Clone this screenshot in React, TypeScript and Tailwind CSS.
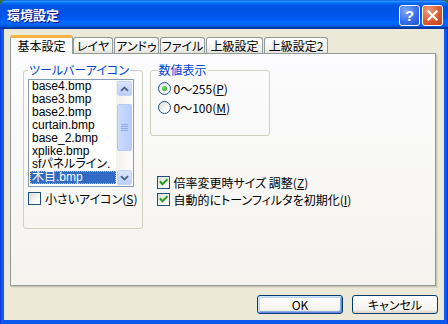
import React from "react";

function CheckBox({ checked }: { checked?: boolean }) {
  return (
    <span className="w-[13px] h-[13px] shrink-0 border border-[#1C5180] bg-[linear-gradient(135deg,#DCDCD7,#FFFFFF_80%)] flex items-center justify-center">
      {checked && (
        <svg width="11" height="11" viewBox="0 0 11 11">
          <path d="M2.5 5 L4.5 7.2 L8.8 2.8" stroke="#21A121" strokeWidth="2" fill="none" strokeLinecap="square" />
        </svg>
      )}
    </span>
  );
}

function Radio({ checked }: { checked?: boolean }) {
  return (
    <span className="w-[13px] h-[13px] shrink-0 rounded-full border border-[#1C5180] bg-[linear-gradient(135deg,#DCDCD7,#FFFFFF_80%)] flex items-center justify-center">
      {checked && <span className="w-[5px] h-[5px] rounded-full bg-[radial-gradient(circle_at_35%_35%,#6BE36B,#21A121)]" />}
    </span>
  );
}

function ScrollBtn({ down }: { down?: boolean }) {
  return (
    <div className="h-[17px] w-[17px] p-px">
      <div className="h-full w-full rounded-[2px] border border-[#C4D4F8] bg-[linear-gradient(180deg,#D9E4FD,#BCCEF9)] flex items-center justify-center">
        <svg width="9" height="6" viewBox="0 0 9 6">
          <path d={down ? "M1 1.2 L4.5 4.5 L8 1.2" : "M1 4.8 L4.5 1.5 L8 4.8"} stroke="#4D6185" strokeWidth="1.8" fill="none" />
        </svg>
      </div>
    </div>
  );
}

const files = [
  "base4.bmp",
  "base3.bmp",
  "base2.bmp",
  "curtain.bmp",
  "base_2.bmp",
  "xplike.bmp",
  "sfパネルライン.",
];

export default function App() {
  return (
    <div className="w-[448px] h-[324px] bg-[#3B6C3A]">
      <div className="w-[448px] h-[324px] flex flex-col rounded-t-[7px] overflow-hidden bg-[linear-gradient(90deg,#0831D9,#1A5CF0_2px,#0A58EC_4px,#0A58EC_calc(100%-4px),#1A5CF0_calc(100%-2px),#0831D9)] font-['Noto_Sans_CJK_JP',sans-serif] text-[12px] text-black [font-feature-settings:'palt']">
        {/* Title bar */}
        <div className="h-[29px] shrink-0 flex items-start pl-[7px] pr-[5px] bg-[linear-gradient(180deg,#0058EE_0%,#3593FF_4%,#288EFF_6%,#127DFF_8%,#036FFC_10%,#0262EE_14%,#0057E5_20%,#0054E3_24%,#0055EB_56%,#005BF5_66%,#026AFE_76%,#0062EF_86%,#0052D6_92%,#0040AB_94%,#003092_100%)]">
          <span className="mt-[6px] text-white font-bold text-[13px] leading-[17px] [text-shadow:1px_1px_0_#0F1089]">環境設定</span>
          <div className="ml-auto mt-[5px] flex gap-[2px]">
            <div className="w-[21px] h-[21px] rounded-[3px] border border-white bg-[radial-gradient(circle_at_30%_25%,#82A9F7,#3A6FE9_55%,#2050D0)] flex items-center justify-center text-white font-bold text-[15px] leading-none font-['Liberation_Sans',sans-serif]">
              ?
            </div>
            <div className="w-[21px] h-[21px] rounded-[3px] border border-white bg-[radial-gradient(circle_at_30%_25%,#F0A080,#DC5A30_55%,#C2401C)] flex items-center justify-center">
              <svg width="13" height="13" viewBox="0 0 13 13">
                <path d="M2.5 2.5 L10.5 10.5 M10.5 2.5 L2.5 10.5" stroke="white" strokeWidth="2.2" strokeLinecap="square" />
              </svg>
            </div>
          </div>
        </div>

        {/* Client */}
        <div className="flex-1 mx-[4px] mb-[4px] bg-[#ECE9D8] flex flex-col">
          {/* Tabs */}
          <div className="mt-[6px] ml-[6px] h-[18px] flex items-end">
            <div className="relative z-10 w-[63px] h-[19px] -mb-px rounded-t-[3px] border-x border-[#919B9C] border-t-[3px] border-t-[#F7B23F] bg-[#FCFCFE] flex items-center justify-center leading-[14px]">
              基本設定
            </div>
            <div className="flex gap-[1px]">
              {[
                ["レイヤ", "w-[40px]"],
                ["アンドゥ", "w-[45px]"],
                ["ファイル", "w-[45px]"],
                ["上級設定", "w-[57px]"],
                ["上級設定2", "w-[64px]"],
              ].map(([t, w]) => (
                <div
                  key={t}
                  className={`${w} h-[16px] rounded-t-[3px] border-x border-t border-[#919B9C] bg-[linear-gradient(180deg,#FFFFFF,#F3F2EC_70%,#E3E1D8)] flex items-center justify-center leading-[14px] pt-px`}
                >
                  {t}
                </div>
              ))}
            </div>
          </div>

          {/* Panel */}
          <div className="ml-[6px] mr-[8px] h-[233px] border border-[#919B9C] shadow-[1px_1px_0_#C8C5B5,2px_2px_0_#DDDACB] bg-[linear-gradient(180deg,#FCFCFE,#F4F3EE)] flex items-start pl-[12px] pt-[9px]">
            {/* Left group */}
            <fieldset className="w-[117px] h-[166px] rounded-[3px] border border-[#D0D0BF] px-[4px]">
              <legend className="px-[1px] leading-[14px] text-[#0046D5]">ツールバーアイコン</legend>
              <div className="mt-[2px] w-[106px] h-[108px] border border-[#7F9DB9] bg-white flex">
                <div className="w-[87px] min-w-0 shrink-0 flex flex-col overflow-x-clip pl-px font-['Liberation_Sans','Noto_Sans_CJK_JP',sans-serif]">
                  {files.map((f) => (
                    <div key={f} className="h-[13px] leading-[13px] pl-[2px] whitespace-nowrap">
                      {f}
                    </div>
                  ))}
                  <div className="h-[13px] leading-[11px] pl-[1px] whitespace-nowrap bg-[#316AC5] text-white border border-dotted border-[#E2C27C]">
                    木目.bmp
                  </div>
                </div>
                <div className="w-[17px] shrink-0 flex flex-col bg-[linear-gradient(90deg,#F3F1EC,#FDFDFA)]">
                  <ScrollBtn />
                  <div className="mt-[7px] mx-px h-[47px] rounded-[2px] border border-[#B4C8F6] bg-[linear-gradient(90deg,#CCDBFD,#BACDF9)] flex flex-col items-center justify-center gap-[1px]">
                    <span className="w-[7px] h-px bg-[#8CA9EE]" />
                    <span className="w-[7px] h-px bg-[#8CA9EE]" />
                    <span className="w-[7px] h-px bg-[#8CA9EE]" />
                    <span className="w-[7px] h-px bg-[#8CA9EE]" />
                  </div>
                  <div className="mt-auto">
                    <ScrollBtn down />
                  </div>
                </div>
              </div>
              <label className="mt-[5px] flex items-center gap-[4px] leading-[13px] whitespace-nowrap">
                <CheckBox />
                <span>
                  小さいアイコン(<u>S</u>)
                </span>
              </label>
            </fieldset>

            {/* Right column */}
            <div className="ml-[7px] flex flex-col">
              <fieldset className="w-[120px] h-[73px] rounded-[3px] border border-[#D0D0BF] px-[7px]">
                <legend className="px-[1px] leading-[14px] text-[#0046D5]">数値表示</legend>
                <div className="mt-[5px] flex flex-col gap-[6px]">
                  <label className="flex items-center gap-[3px] leading-[13px] whitespace-nowrap">
                    <Radio checked />
                    <span>
                      0～255(<u>P</u>)
                    </span>
                  </label>
                  <label className="flex items-center gap-[3px] leading-[13px] whitespace-nowrap">
                    <Radio />
                    <span>
                      0～100(<u>M</u>)
                    </span>
                  </label>
                </div>
              </fieldset>
              <div className="mt-[40px] ml-[7px] flex flex-col gap-[4px]">
                <label className="flex items-center gap-[4px] leading-[13px] whitespace-nowrap">
                  <CheckBox checked />
                  <span>
                    倍率変更時サイズ 調整(<u>Z</u>)
                  </span>
                </label>
                <label className="flex items-center gap-[4px] leading-[13px] whitespace-nowrap">
                  <CheckBox checked />
                  <span>
                    自動的にトーンフィルタを初期化(<u>I</u>)
                  </span>
                </label>
              </div>
            </div>
          </div>

          {/* Buttons */}
          <div className="mt-[9px] pr-[6px] flex justify-end gap-[9px]">
            <button className="w-[86px] h-[19px] rounded-[3px] border border-[#003C74] bg-[linear-gradient(180deg,#FFFFFF,#F4F3EE_80%,#D8D2C6)] shadow-[inset_1px_1px_0_#CEE7FF,inset_-1px_-1px_0_#6982EE,inset_2px_2px_0_#BCD4F6,inset_-2px_-2px_0_#89ADE4] flex items-center justify-center leading-[14px] font-['Noto_Sans_CJK_JP',sans-serif]">
              OK
            </button>
            <button className="w-[86px] h-[19px] rounded-[3px] border border-[#003C74] bg-[linear-gradient(180deg,#FFFFFF,#F4F3EE_80%,#D8D2C6)] flex items-center justify-center leading-[14px] font-['Noto_Sans_CJK_JP',sans-serif]">
              キャンセル
            </button>
          </div>
        </div>
      </div>
    </div>
  );
}
